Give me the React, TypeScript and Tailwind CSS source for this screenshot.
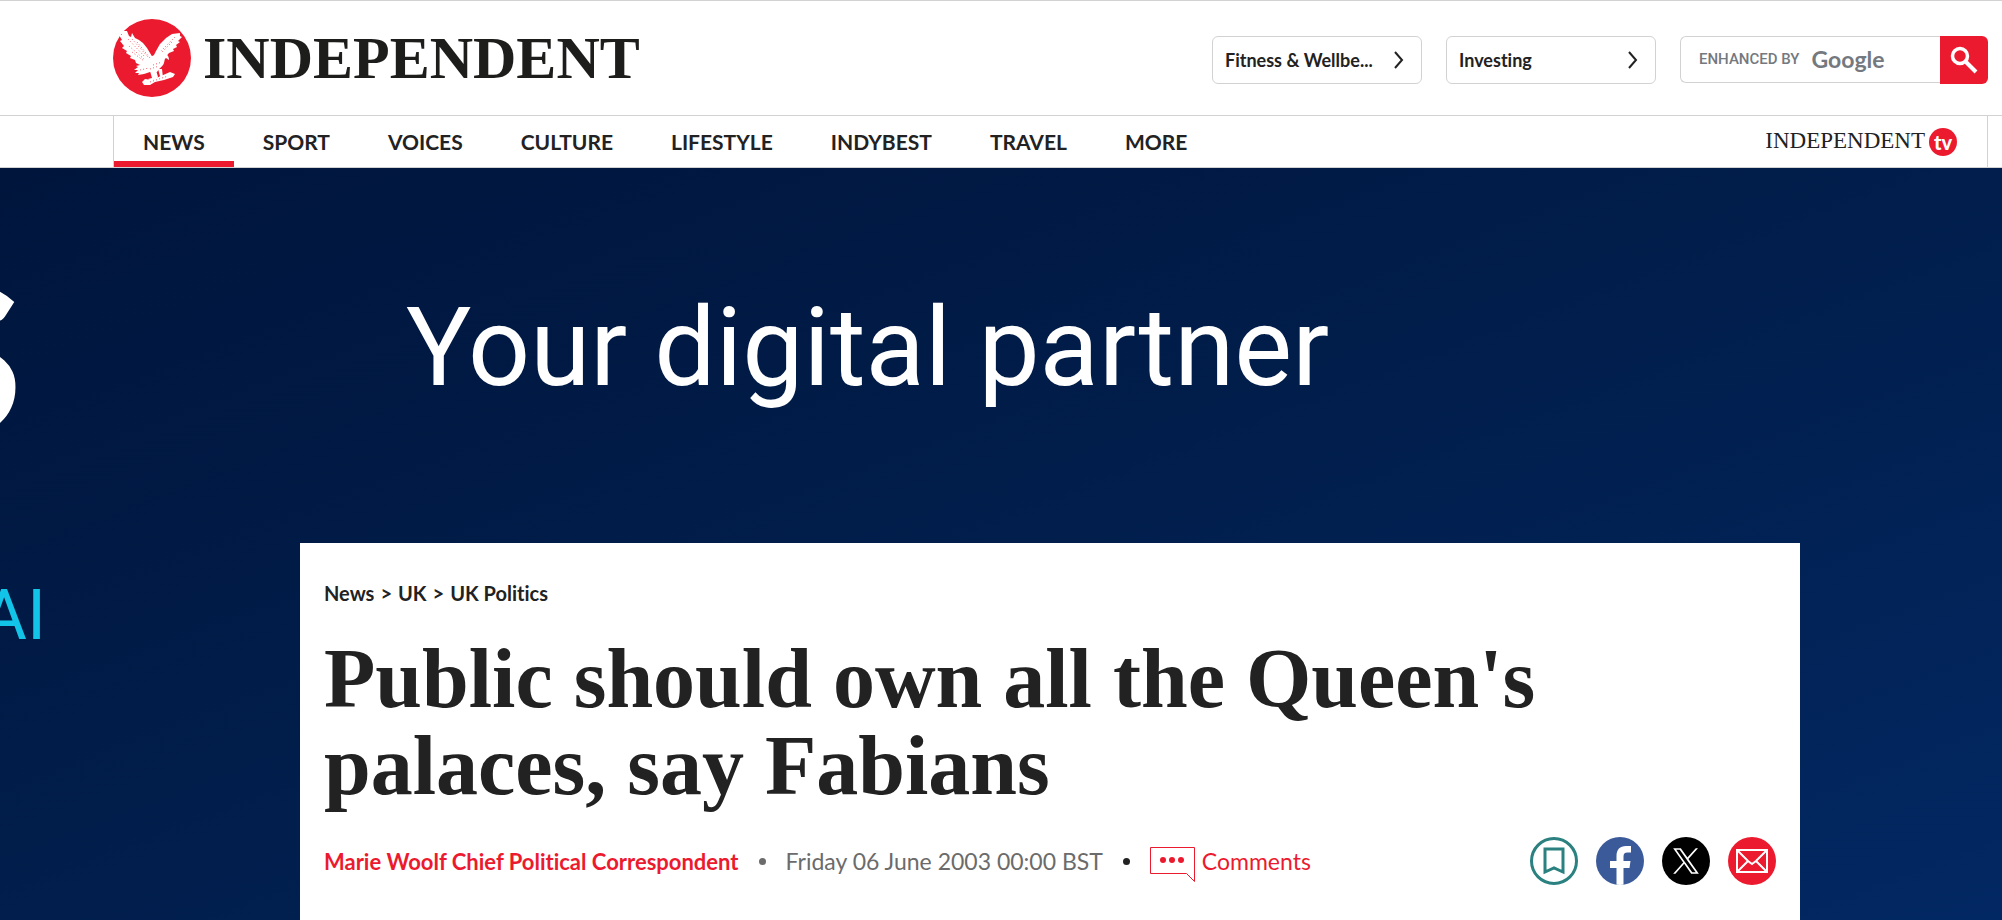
import type { ReactNode } from "react";

const NAV_ITEMS = [
  "News",
  "Sport",
  "Voices",
  "Culture",
  "Lifestyle",
  "IndyBest",
  "Travel",
  "More",
];

function EagleLogo() {
  return (
    <svg viewBox="0 0 78 78" className="size-[78px] shrink-0" aria-hidden="true">
      <circle cx="39" cy="39" r="39" fill="#ec1a2e" />
      <g fill="#fff">
        <path d="M14 12l2 5 2 1 1-4 3 5 4 2 4 3 4 5 3 5 3 5 3 4 1 7-6 3-6-3-5-4-4-2-1-3-5-2 1-2-5-3 1-2-5-3 2-2-4-5 2-1-3-5 3 0-3-5 4 1z" />
        <path d="M67 14l-8 1-6 4-6 6-4 7-4 8 5 4 7-4 5-6 5-2-1-2 4-2-1-2 4-3-2-1 4-4-2-1z" />
        <path d="M34 42c4-6 12-9 17-7 3 0 5 2 5 6l-3-2c-2 1-1 4-3 7-3 4-8 7-14 6z" />
        <path d="M40 42l-9 3-8 2 2 1-4 3 4 0-3 3 4 0-1 2 6-1 6-2 7 0 4-6z" />
        <path d="M37 52l2 7-4 1 3 2 4-2 1 2 2-4-2-7zM45 50l2 7-2 4 5-2-1-9z" />
        <path d="M32 60l7 1 9-4 9-4 5 2-2 3-9 3-9 2-5 3-6 0-2-3z" />
      </g>
      <g stroke="#ec1a2e" strokeWidth="0.7" strokeDasharray="1 2.2" fill="none">
        <path d="M15 20l17 18M19 20l16 18M24 23l13 16M16 27l15 13M19 33l12 9" />
        <path d="M62 18l-14 14M59 23l-11 11M40 46l9-3M37 50l9-3M27 51l9-2" />
        <path d="M37 63l18-6" />
      </g>
    </svg>
  );
}

function Chevron() {
  return (
    <svg viewBox="0 0 12 20" className="h-5 w-3 shrink-0" fill="none" stroke="currentColor" strokeWidth="2" aria-hidden="true">
      <path d="M2 2l7 8-7 8" />
    </svg>
  );
}

function PromoLink({ children }: { children: ReactNode }) {
  return (
    <a
      href="#"
      className="flex h-12 w-[210px] items-center justify-between rounded-md border border-[#d2d2d2] pr-4 pl-3 text-lg font-bold"
    >
      <span>{children}</span>
      <Chevron />
    </a>
  );
}

function SearchForm() {
  return (
    <form className="flex h-12 w-[308px]" onSubmit={(e) => e.preventDefault()}>
      <label className="flex h-[47px] flex-1 items-center rounded-l-md border border-r-0 border-[#d2d2d2] pl-[18px] font-[Roboto,sans-serif] text-[#74797f]">
        <span className="text-[15px] font-medium">ENHANCED BY</span>
        <span className="pl-3 font-[Lato,sans-serif] text-[23px] font-bold">Google</span>
        <input type="search" aria-label="Search" className="w-0 flex-1 outline-none" />
      </label>
      <button aria-label="Search" className="grid w-12 place-items-center rounded-r-md bg-[#ec1a2e] text-white">
        <svg viewBox="0 0 28 28" className="size-7" fill="none" stroke="currentColor" aria-hidden="true">
          <circle cx="10" cy="10" r="7.5" strokeWidth="3.5" />
          <path d="M16 16l10 10" strokeWidth="4" />
        </svg>
      </button>
    </form>
  );
}

function Header() {
  return (
    <header className="border-t border-[#d2d2d2] bg-white">
      <div className="flex h-[114px] items-center justify-between pr-[14px] pl-[113px]">
        <a href="#" className="flex items-center gap-3" aria-label="Independent">
          <EagleLogo />
          <span className="font-[Liberation_Serif,serif] text-[60px] leading-[60px] font-bold text-[#1d1d1b]">
            INDEPENDENT
          </span>
        </a>
        <div className="flex items-center gap-6 pt-1">
          <PromoLink>Fitness &amp; Wellbe...</PromoLink>
          <PromoLink>Investing</PromoLink>
          <SearchForm />
        </div>
      </div>
      <div className="border-y border-[#d2d2d2] pr-[14px] pl-[113px]">
        <nav className="flex h-[51px] items-stretch border-x border-[#d2d2d2] pr-[30px]">
          {NAV_ITEMS.map((item, i) => (
            <a
              key={item}
              href="#"
              className={
                i === 0
                  ? "flex items-center border-b-6 border-[#ec1a2e] px-[29px] pt-[6px] text-[21px] font-bold uppercase"
                  : "flex items-center px-[29px] text-[21px] font-bold uppercase"
              }
            >
              {item}
            </a>
          ))}
          <a href="#" className="ml-auto flex items-center gap-1">
            <span className="font-[Liberation_Serif,serif] text-[23px]">INDEPENDENT</span>
            <span className="grid size-7 place-items-center rounded-full bg-[#ec1a2e] text-xl leading-5 font-black text-white">
              tv
            </span>
          </a>
        </nav>
      </div>
    </header>
  );
}

function BannerAd() {
  return (
    <a
      href="#"
      className="col-start-1 row-start-1 flex overflow-hidden bg-linear-to-br from-[#00153c] via-[#011d4a] via-45% to-[#022863]"
    >
      <div className="flex w-[406px] flex-col">
        <span className="flex w-[24px] justify-end pt-[10px] text-[290px] leading-[290px] font-black text-white">
          s
        </span>
        <span className="flex w-[46px] justify-end pt-[107px] font-[Roboto,sans-serif] text-[70px] leading-[80px] text-[#12c4e8]">
          AI
        </span>
      </div>
      <span className="pt-[116px] font-[Roboto,sans-serif] text-[109px] leading-[128px] whitespace-nowrap text-white">
        Your digital partner
      </span>
    </a>
  );
}

function ShareLinks() {
  return (
    <div className="flex gap-[18px]">
      <button aria-label="Save article" className="grid size-12 place-items-center rounded-full border-3 border-[#2b8080]">
        <svg viewBox="0 0 22 28" className="h-7 w-[22px]" fill="none" stroke="#2b8080" strokeWidth="3" aria-hidden="true">
          <path d="M2 2h18v23l-9-4-9 4z" />
        </svg>
      </button>
      <a href="#" aria-label="Facebook" className="size-12 overflow-hidden rounded-full bg-[#3b5a9a] text-white">
        <svg viewBox="0 0 48 48" className="size-12" fill="currentColor" aria-hidden="true">
          <path d="M20.500 48V31H14v-7h6.500v-5c0-6.500 3.500-10 9.500-10h5v6.500h-3.500c-3 0-4 1.300-4 4V24h7l-1 7h-6v17z" />
        </svg>
      </a>
      <a href="#" aria-label="X" className="grid size-12 place-items-center rounded-full bg-black text-white">
        <svg viewBox="0 0 24 24" className="size-7" fill="currentColor" aria-hidden="true">
          <path d="M14.095479,10.316482L22.286354,1h-1.940718l-7.115352,8.087682L7.551414,1H1l8.589488,12.231093L1,23h1.940717l7.509372-8.542861L16.448587,23H23L14.095479,10.316482z M11.436522,13.338465l-0.871624-1.218704l-6.924311-9.68815h2.981339l5.58978,7.82155l0.867949,1.218704l7.26506,10.166271h-2.981339L11.436522,13.338465z" />
        </svg>
      </a>
      <a href="#" aria-label="Email" className="grid size-12 place-items-center rounded-full bg-[#ec1a2e] text-white">
        <svg viewBox="0 0 32 24" className="h-6 w-8" fill="none" stroke="currentColor" strokeWidth="2" aria-hidden="true">
          <path d="M1 1h30v22H1zM1 1l11 11 4 3 4-3L31 1M1 23l11-11M31 23L20 12" />
        </svg>
      </a>
    </div>
  );
}

function ArticleHeader() {
  return (
    <article className="col-start-1 row-start-1 mt-[375px] mr-[202px] ml-[300px] bg-white px-6 pt-9 pb-9">
      <nav aria-label="Breadcrumb" className="flex gap-[6px] text-xl leading-7 font-bold">
        <a href="#">News</a>
        <span>&gt;</span>
        <a href="#">UK</a>
        <span>&gt;</span>
        <a href="#">UK Politics</a>
      </nav>
      <h1 className="max-w-[1300px] pt-7 font-[Liberation_Serif,serif] text-[84px] leading-[87px] font-bold">
        Public should own all the Queen's palaces, say Fabians
      </h1>
      <div className="flex items-center justify-between pt-7">
        <div className="flex items-center text-[23px]">
          <a href="#" className="text-[22px] font-bold text-[#ec1a2e]">
            Marie Woolf Chief Political Correspondent
          </a>
          <span className="mx-5 size-[7px] rounded-full bg-[#6b6b6b]" />
          <time className="text-[#6b6b6b]">Friday 06 June 2003 00:00 BST</time>
          <span className="mx-5 size-[7px] rounded-full bg-[#222]" />
          <a href="#" className="flex items-center gap-[6px] text-[#ec1a2e]">
            <svg viewBox="0 0 46 36" className="mt-2 h-9 w-[46px]" fill="none" stroke="currentColor" aria-hidden="true">
              <path d="M.5.5h44v34l-8-8H.5z" />
              <g fill="currentColor" stroke="none">
                <circle cx="13" cy="13" r="3" />
                <circle cx="22" cy="13" r="3" />
                <circle cx="31" cy="13" r="3" />
              </g>
            </svg>
            Comments
          </a>
        </div>
        <ShareLinks />
      </div>
    </article>
  );
}

export default function App() {
  return (
    <div className="min-h-screen bg-white font-[Lato,sans-serif] text-[#222] [font-variant-ligatures:no-common-ligatures]">
      <Header />
      <main className="grid">
        <BannerAd />
        <ArticleHeader />
      </main>
    </div>
  );
}
